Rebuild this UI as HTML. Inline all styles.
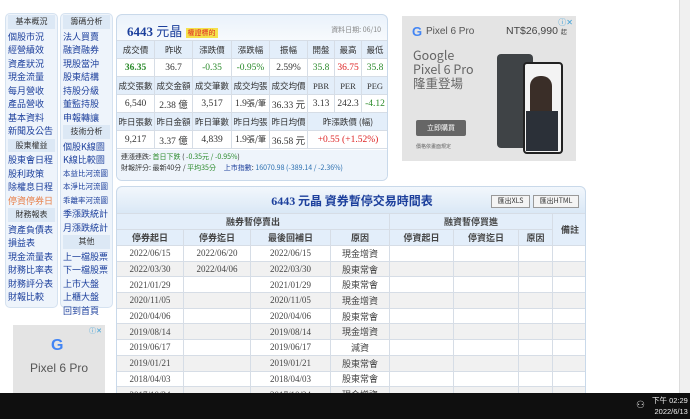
<!DOCTYPE html>
<html><head><meta charset="utf-8"><style>
*{margin:0;padding:0;box-sizing:border-box}
body{width:690px;height:419px;overflow:hidden;background:#fff;font-family:"Liberation Serif","Noto Sans CJK TC",serif;position:relative;font-size:10px;color:#333}
.abs{position:absolute}
.nav{position:absolute;top:13px;width:53px;height:295px;background:#eef4fb;border:1px solid #d5e2f0;border-radius:5px}
.nav div{height:13.5px;line-height:13.5px;font-size:9px;color:#1c3f9c;padding-left:2px;white-space:nowrap;overflow:hidden;font-family:"Noto Sans CJK TC",sans-serif}
.nav div.h{background:#dce8f5;color:#333;text-align:center;padding:0;font-size:8px;margin:1px 2px}
.box{position:absolute;border:1px solid #c9d9ea;border-radius:6px;background:#fff;overflow:hidden}
table{border-collapse:collapse;position:absolute;table-layout:fixed}
td{border:1px solid #d6dde6;text-align:center;white-space:nowrap;overflow:hidden;font-size:9.5px;background:#fff}
.th td{background:#e3eefa;font-family:"Noto Sans CJK TC",sans-serif;color:#333;font-size:8.5px}
.cj{font-family:"Noto Sans CJK TC",sans-serif}
.t2 td{height:15.7px;font-size:9px;color:#444}
.t2 tr.g td{background:#f1f1f1}
.t2 .th td{background:#e3eefa;font-size:9px}
</style></head><body>

<div class="nav" style="left:5px">
<div class="h">基本概況</div><div>個股市況</div><div>經營績效</div><div>資產狀況</div><div>現金流量</div><div>每月營收</div><div>產品營收</div><div>基本資料</div><div>新聞及公告</div>
<div class="h">股東權益</div><div>股東會日程</div><div>股利政策</div><div>除權息日程</div><div style="color:#e8804a">停資停券日</div>
<div class="h">財務報表</div><div>資產負債表</div><div>損益表</div><div>現金流量表</div><div>財務比率表</div><div>財務評分表</div><div>財報比較</div>
</div>
<div class="nav" style="left:60px">
<div class="h">籌碼分析</div><div>法人買賣</div><div>融資融券</div><div>現股當沖</div><div>股東結構</div><div>持股分級</div><div>董監持股</div><div>申報轉讓</div>
<div class="h">技術分析</div><div>個股K線圖</div><div>K線比較圖</div><div style="font-size:7.5px">本益比河流圖</div><div style="font-size:7.5px">本淨比河流圖</div><div style="font-size:7.5px">乖離率河流圖</div><div>季漲跌統計</div><div>月漲跌統計</div>
<div class="h">其他</div><div>上一檔股票</div><div>下一檔股票</div><div>上市大盤</div><div>上櫃大盤</div><div>回到首頁</div>
</div>

<div class="box" style="left:116px;top:14px;width:272px;height:167px;background:linear-gradient(#eaf2fb,#f7fafd 25px,#fff 26px)">
<div class="abs" style="left:10px;top:6px;font-size:13px;font-weight:bold;color:#1c3f9c">6443 <span class="cj" style="font-weight:normal">元晶</span> <span class="cj" style="font-size:7px;background:#f5e14a;color:#d22;padding:0 2px;font-weight:normal;vertical-align:middle">權證標的</span></div>
<div class="abs cj" style="right:6px;top:10px;font-size:7px;color:#888">資料日期: 06/10</div>
<table style="left:-1px;top:25px;width:272px">
<colgroup><col style="width:38px"><col style="width:38px"><col style="width:39px"><col style="width:38px"><col style="width:38px"><col style="width:27px"><col style="width:27px"><col style="width:27px"></colgroup>
<tr class="th" style="height:18px"><td>成交價</td><td>昨收</td><td>漲跌價</td><td>漲跌幅</td><td>振幅</td><td>開盤</td><td>最高</td><td>最低</td></tr>
<tr style="height:18px"><td style="color:#2a8a2a;font-weight:bold">36.35</td><td>36.7</td><td style="color:#2a8a2a">-0.35</td><td style="color:#2a8a2a">-0.95%</td><td>2.59%</td><td style="color:#2a8a2a">35.8</td><td style="color:#d22">36.75</td><td style="color:#2a8a2a">35.8</td></tr>
<tr class="th" style="height:18px"><td>成交張數</td><td>成交金額</td><td>成交筆數</td><td>成交均張</td><td>成交均價</td><td style="font-family:'Liberation Serif'">PBR</td><td style="font-family:'Liberation Serif'">PER</td><td style="font-family:'Liberation Serif'">PEG</td></tr>
<tr style="height:18px"><td>6,540</td><td>2.38 <span class="cj">億</span></td><td>3,517</td><td>1.9<span class="cj" style="font-size:8px">張/筆</span></td><td>36.33 <span class="cj">元</span></td><td>3.13</td><td>242.3</td><td style="color:#2a8a2a">-4.12</td></tr>
<tr class="th" style="height:18px"><td>昨日張數</td><td>昨日金額</td><td>昨日筆數</td><td>昨日均張</td><td>昨日均價</td><td colspan="3">昨漲跌價 (幅)</td></tr>
<tr style="height:18px"><td>9,217</td><td>3.37 <span class="cj">億</span></td><td>4,839</td><td>1.9<span class="cj" style="font-size:8px">張/筆</span></td><td>36.58 <span class="cj">元</span></td><td colspan="3" style="color:#d22">+0.55 (+1.52%)</td></tr>
</table>
<div class="abs" style="left:0;top:135px;width:272px;height:32px;background:#eef4fb"></div>
<div class="abs cj" style="left:4px;top:137px;font-size:7px;color:#333;white-space:nowrap">連漲連跌: <span style="color:#2a8a2a">首日下跌</span> ( <span style="color:#2a8a2a">-0.35元 / -0.95%</span>)</div>
<div class="abs cj" style="left:4px;top:148px;font-size:7px;color:#333;white-space:nowrap">財報評分: 最新40分 / <span style="color:#2a8a2a">平均35分</span>&nbsp;&nbsp;&nbsp;&nbsp;&nbsp;<span style="color:#1c3f9c">上市指數</span>: <span style="color:#2a6fb0">16070.98 (-389.14 / -2.36%)</span></div>
</div>

<div class="abs" style="left:402px;top:16px;width:174px;height:145px;background:#e4e4e4">
<div class="abs" style="right:3px;top:1px;font-size:8px;color:#3ba0d8">ⓘ✕</div>
<div class="abs" style="left:10px;top:8px;font-size:13px;font-weight:bold;color:#4285f4;font-family:'Liberation Sans'">G</div>
<div class="abs" style="left:24px;top:10px;font-size:10px;color:#555;font-family:'Liberation Sans'">Pixel 6 Pro</div>
<div class="abs" style="left:104px;top:9px;font-size:10.5px;color:#444;font-family:'Liberation Sans',sans-serif">NT$26,990 <span class="cj" style="font-size:6px">起</span></div>
<div class="abs cj" style="left:11px;top:32px;font-size:12.5px;line-height:14px;color:#666">Google<br>Pixel 6 Pro<br>隆重登場</div>
<div class="abs" style="left:95px;top:38px;width:36px;height:94px;background:#3f4346;border-radius:4px"></div>
<div class="abs" style="left:121px;top:46px;width:40px;height:92px;background:#f3f3f3;border:2px solid #222;border-radius:4px"></div>
<div class="abs" style="left:128px;top:60px;width:22px;height:40px;background:#3a2e28;border-radius:10px 10px 4px 4px"></div>
<div class="abs" style="left:124px;top:95px;width:32px;height:40px;background:#2b3038"></div>
<div class="abs cj" style="left:14px;top:104px;width:50px;height:16px;background:#666;color:#fff;font-size:7px;line-height:16px;text-align:center;border-radius:2px">立即購買</div>
<div class="abs cj" style="left:14px;top:127px;font-size:5px;color:#666">價格依畫面規定</div>
</div>

<div class="box" style="left:116px;top:186px;width:470px;height:215px;border-radius:6px 6px 0 0;background:linear-gradient(#f2f7fc,#dae8f6 26px)">
<div class="abs cj" style="left:0;width:470px;top:5px;text-align:center;font-size:12px;color:#1c3f9c;font-weight:bold"><span style="font-family:'Liberation Serif'">6443</span> 元晶 資券暫停交易時間表</div>
<div class="abs cj" style="left:374px;top:8px;width:39px;height:13px;border:1px solid #999;background:#f4f4f4;font-size:7px;line-height:11px;text-align:center">匯出XLS</div>
<div class="abs cj" style="left:416px;top:8px;width:46px;height:13px;border:1px solid #999;background:#f4f4f4;font-size:7px;line-height:11px;text-align:center">匯出HTML</div>
<table class="t2" style="left:-1px;top:26px;width:471px">
<colgroup><col style="width:67px"><col style="width:67px"><col style="width:80px"><col style="width:59px"><col style="width:64px"><col style="width:65px"><col style="width:34px"><col style="width:35px"></colgroup>
<tr class="th" style="height:16px"><td colspan="4" style="font-weight:bold">融券暫停賣出</td><td colspan="3" style="font-weight:bold">融資暫停買進</td><td rowspan="2" style="font-weight:bold">備註</td></tr>
<tr class="th" style="height:16px"><td style="font-weight:bold">停券起日</td><td style="font-weight:bold">停券迄日</td><td style="font-weight:bold">最後回補日</td><td style="font-weight:bold">原因</td><td style="font-weight:bold">停資起日</td><td style="font-weight:bold">停資迄日</td><td style="font-weight:bold">原因</td></tr>
<tr><td>2022/06/15</td><td>2022/06/20</td><td>2022/06/15</td><td class="cj">現金增資</td><td></td><td></td><td></td><td></td></tr>
<tr class="g"><td>2022/03/30</td><td>2022/04/06</td><td>2022/03/30</td><td class="cj">股東常會</td><td></td><td></td><td></td><td></td></tr>
<tr><td>2021/01/29</td><td></td><td>2021/01/29</td><td class="cj">股東常會</td><td></td><td></td><td></td><td></td></tr>
<tr class="g"><td>2020/11/05</td><td></td><td>2020/11/05</td><td class="cj">現金增資</td><td></td><td></td><td></td><td></td></tr>
<tr><td>2020/04/06</td><td></td><td>2020/04/06</td><td class="cj">股東常會</td><td></td><td></td><td></td><td></td></tr>
<tr class="g"><td>2019/08/14</td><td></td><td>2019/08/14</td><td class="cj">現金增資</td><td></td><td></td><td></td><td></td></tr>
<tr><td>2019/06/17</td><td></td><td>2019/06/17</td><td class="cj">減資</td><td></td><td></td><td></td><td></td></tr>
<tr class="g"><td>2019/01/21</td><td></td><td>2019/01/21</td><td class="cj">股東常會</td><td></td><td></td><td></td><td></td></tr>
<tr><td>2018/04/03</td><td></td><td>2018/04/03</td><td class="cj">股東常會</td><td></td><td></td><td></td><td></td></tr>
<tr class="g"><td>2017/10/24</td><td></td><td>2017/10/24</td><td class="cj">現金增資</td><td></td><td></td><td></td><td></td></tr>
</table>
</div>

<div class="abs" style="left:13px;top:325px;width:92px;height:70px;background:#e4e4e4">
<div class="abs" style="right:3px;top:1px;font-size:7px;color:#3ba0d8">ⓘ✕</div>
<div class="abs" style="left:38px;top:12px;font-size:16px;font-weight:bold;color:#4285f4;font-family:'Liberation Sans'">G</div>
<div class="abs" style="left:17px;top:36px;font-size:12px;color:#555;font-family:'Liberation Sans'">Pixel 6 Pro</div>
</div>

<div class="abs" style="left:679px;top:0;width:11px;height:393px;background:#f0f0f0;border-left:1px solid #ddd"></div>
<div class="abs" style="left:0;top:393px;width:690px;height:26px;background:#0f0f0f"></div>
<div class="abs" style="left:636px;top:400px;color:#ddd;font-size:10px">⚇</div>
<div class="abs cj" style="left:652px;top:395px;color:#eee;font-size:7.5px;line-height:11px;text-align:right;font-family:'Liberation Sans','Noto Sans CJK TC',sans-serif">下午 02:29<br>2022/6/13</div>
</body></html>
